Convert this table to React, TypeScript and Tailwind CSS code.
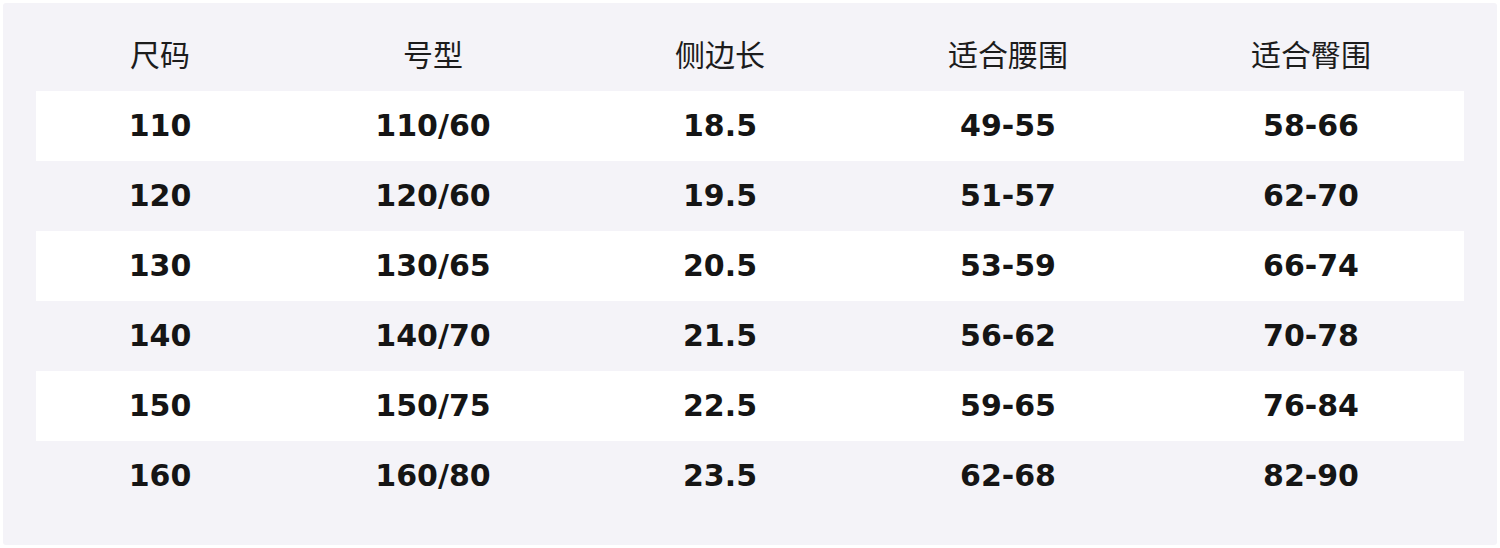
const headers = ['尺码', '号型', '侧边长', '适合腰围', '适合臀围'];

const rows = [
  ['110', '110/60', '18.5', '49-55', '58-66'],
  ['120', '120/60', '19.5', '51-57', '62-70'],
  ['130', '130/65', '20.5', '53-59', '66-74'],
  ['140', '140/70', '21.5', '56-62', '70-78'],
  ['150', '150/75', '22.5', '59-65', '76-84'],
  ['160', '160/80', '23.5', '62-68', '82-90'],
];

const cols = 'grid grid-cols-[248px_298px_276px_300px_306px]';

export default function App() {
  return (
    <div className="h-[548px] w-[1500px] bg-white p-[3px]">
      <div className="h-full w-full rounded-[3px] bg-[#f4f3f8] px-[33px] pt-[17px]">
        <div className={`${cols} h-[71px] items-center pb-[6px] text-[30px] text-[#1c1c1c] [font-family:'Noto_Sans_CJK_SC',sans-serif]`}>
          {headers.map((h) => (
            <div key={h} className="text-center leading-none">
              {h}
            </div>
          ))}
        </div>
        {rows.map((r, i) => (
          <div
            key={r[0]}
            className={`${cols} h-[70px] items-center text-[30px] font-bold text-[#151515] [font-family:'DejaVu_Sans',sans-serif] ${
              i % 2 === 0 ? 'bg-white' : ''
            }`}
          >
            {r.map((c, j) => (
              <div key={j} className="text-center leading-none">
                {c}
              </div>
            ))}
          </div>
        ))}
      </div>
    </div>
  );
}
